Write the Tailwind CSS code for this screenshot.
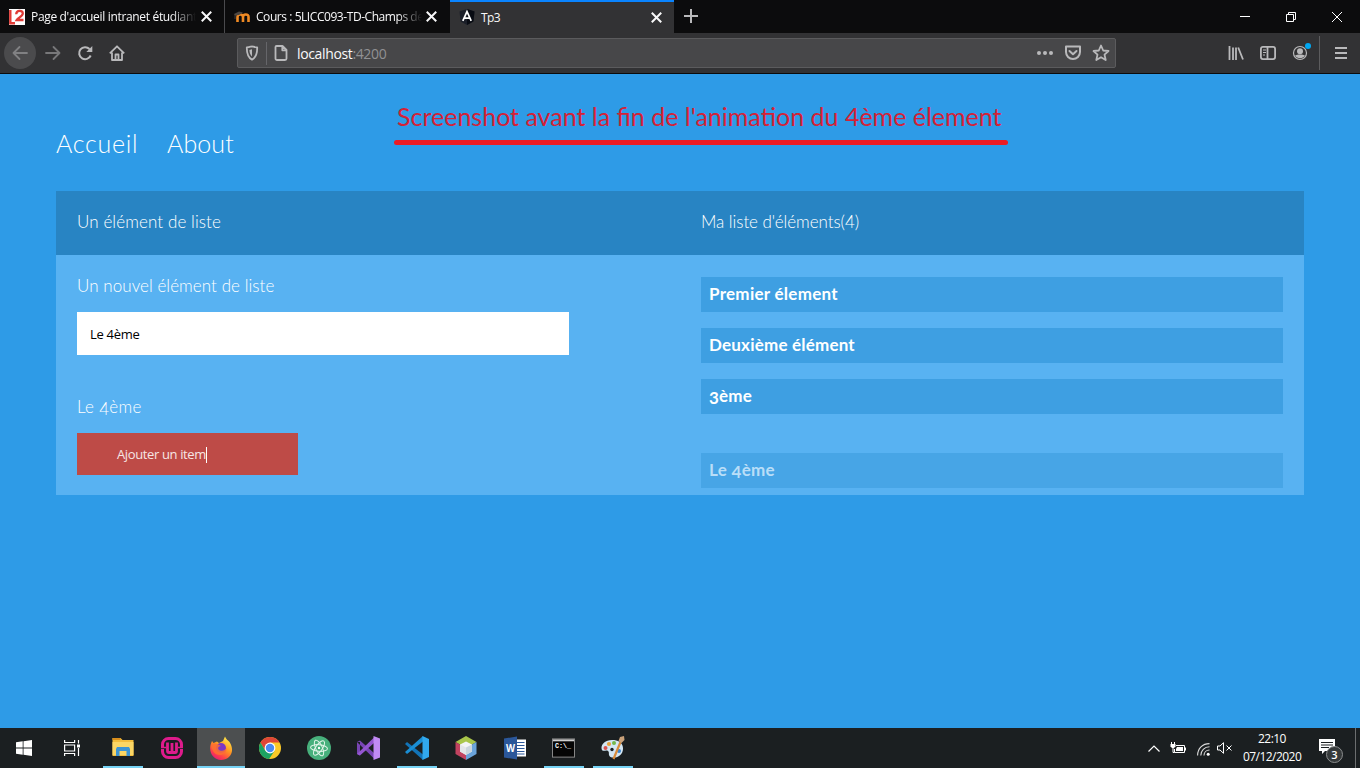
<!DOCTYPE html>
<html lang="fr">
<head>
<meta charset="utf-8">
<title>Tp3</title>
<script src="https://cdn.jsdelivr.net/npm/@tailwindcss/browser@4"></script>
</head>
<body class="w-[1360px] h-[768px] overflow-hidden flex flex-col bg-[#2e9be7] font-['Open_Sans','Noto_Sans',sans-serif]">

<!-- Tab strip -->
<header class="h-[33px] shrink-0 bg-[#0c0c0d] flex text-[12px] text-[#f9f9fa]">
  <div class="w-[225px] border-r border-[#4a4a4d] flex items-center pl-[9px]">
    <svg class="size-4 shrink-0" viewBox="0 0 16 16"><rect width="16" height="16" fill="#fff"/><path d="M1.300 1v13.300H6" fill="none" stroke="#e03a35" stroke-width="2.400"/><path d="M7.200 5.200C7.400 1 14 .8 13.800 4.600c0 2.500-4.500 4.100-6 6.400h6.700" fill="none" stroke="#e03a35" stroke-width="2.300"/></svg>
    <span class="ml-[6px] w-[165px] overflow-hidden whitespace-nowrap tracking-[-0.33px] mask-r-from-85%">Page d'accueil intranet étudiants</span>
    <svg class="ml-[5px] size-[11px] shrink-0" viewBox="0 0 10 10" stroke="#f9f9fa" stroke-width="1.800"><path d="M.7.700l8.600 8.600M9.300.700L.7 9.300"/></svg>
  </div>
  <div class="w-[225px] flex items-center pl-[9px]">
    <svg class="size-4 shrink-0" viewBox="0 0 16 16"><path d="M3.500 13V8q0-2.500 2.700-2.500T9 8v5M9 8q0-2.500 2.800-2.500T14.500 8v5" fill="none" stroke="#f08a24" stroke-width="2.600"/><path d="M0 5l5-2.500 4 1-4 2.500-3.500.5z" fill="#4b4642"/><path d="M1 5v5" stroke="#5b544d" stroke-width=".7"/></svg>
    <span class="ml-[6px] w-[166px] overflow-hidden whitespace-nowrap tracking-[-0.44px] mask-r-from-85%">Cours : 5LICC093-TD-Champs de</span>
    <svg class="ml-[4px] size-[11px] shrink-0" viewBox="0 0 10 10" stroke="#f9f9fa" stroke-width="1.800"><path d="M.7.700l8.600 8.600M9.300.700L.7 9.300"/></svg>
  </div>
  <div class="w-[224px] bg-[#323234] border-t-2 border-[#0a84ff] flex items-center pl-[9px] pb-px">
    <svg class="size-4 shrink-0" viewBox="0 0 16 16"><path d="M8 0l7.500 2.600-1.100 10L8 16l-6.400-3.400L.5 2.600z" fill="#1b1f29"/><path d="M8 0l7.500 2.600-1.100 10L8 16z" fill="#080b12"/><path d="M3.800 11.800L8 2.600l4.200 9.200M5.500 9.100h5" fill="none" stroke="#fff" stroke-width="1.700"/></svg>
    <span class="ml-[6px] w-[165px] pt-px tracking-[-0.6px]">Tp3</span>
    <svg class="ml-[5px] size-[11px] shrink-0" viewBox="0 0 10 10" stroke="#f9f9fa" stroke-width="1.800"><path d="M.7.700l8.600 8.600M9.300.700L.7 9.300"/></svg>
  </div>
  <svg class="ml-[10px] mt-[9px] size-[14px]" viewBox="0 0 14 14" stroke="#b9b9bb" stroke-width="2"><path d="M7 0v14M0 7h14"/></svg>
  <div class="ml-auto flex items-center gap-[36px] pr-[18px]">
    <svg class="size-[10px]" viewBox="0 0 10 10" stroke="#fff"><path d="M0 4.500h10"/></svg>
    <svg class="size-[10px]" viewBox="0 0 10 10" stroke="#fff" fill="none"><path d="M.5 2.500h7v7h-7zM2.500 2.500v-2h7v7h-2"/></svg>
    <svg class="size-[10px]" viewBox="0 0 10 10" stroke="#fff"><path d="M0 0l10 10M10 0L0 10"/></svg>
  </div>
</header>

<!-- Navigation toolbar -->
<nav class="h-[41px] shrink-0 bg-[#323234] border-b border-[#0c0c0d] flex items-center text-[#b9b9bb]">
  <div class="ml-[4px] size-8 rounded-full bg-[#4b4b4d] grid place-items-center">
    <svg class="size-4" viewBox="0 0 16 16" fill="none" stroke="#818183" stroke-width="1.800" stroke-linecap="round" stroke-linejoin="round"><path d="M15 8H1.500M7.500 2l-6 6 6 6"/></svg>
  </div>
  <svg class="ml-[9px] size-4" viewBox="0 0 16 16" fill="none" stroke="#78787a" stroke-width="1.800" stroke-linecap="round" stroke-linejoin="round"><path d="M1 8h13.500M8.500 2l6 6-6 6"/></svg>
  <svg class="ml-4 size-4" viewBox="0 0 16 16" fill="none" stroke="currentColor" stroke-width="2"><path d="M13.700 10.500A6 6 0 1 1 12.500 4"/><path d="M15.300 1v6h-6z" fill="currentColor" stroke="none"/></svg>
  <svg class="ml-4 size-4" viewBox="0 0 16 16" fill="none" stroke="currentColor" stroke-width="1.800" stroke-linejoin="round"><path d="M.8 8.300L8 1.300l7.200 7M3 7.500V15h10V7.500"/><path d="M6.500 15V9.500h3V15"/></svg>

  <div class="ml-[112px] w-[879px] h-[30px] rounded-[2px] border border-[#5b5b5d] bg-[#474749] flex items-center">
    <svg class="ml-[6px] size-4" viewBox="0 0 16 16" fill="none" stroke="currentColor" stroke-width="1.800" stroke-linejoin="round"><path d="M2.800 2.500C6 2.300 6.500 1.500 8 1.300c1.500.2 2 1 5.200 1.200C13.300 9 12 12.500 8 14.700 4 12.500 2.700 9 2.800 2.500z"/><path d="M8 4.300v7.200C6.200 10 5.600 8 5.400 5z" fill="currentColor" stroke="none"/></svg>
    <span class="ml-[6px] w-px h-[23px] bg-[#66666a]"></span>
    <svg class="ml-[6px] size-4" viewBox="0 0 16 16" fill="none" stroke="currentColor" stroke-width="1.800" stroke-linejoin="round"><path d="M3.500 1h6l4 4v8.500a1.500 1.500 0 0 1-1.500 1.500H4a1.500 1.500 0 0 1-1.500-1.500V2a1 1 0 0 1 1-1zM9.300 1v4.300h4.200"/></svg>
    <span class="ml-[8px] pt-px text-[14px] tracking-[-0.36px] text-[#f9f9fa]">localhost<span class="text-[#919193]">:4200</span></span>
    <svg class="ml-auto size-[18px]" viewBox="0 0 18 18" fill="currentColor"><circle cx="3" cy="9" r="2"/><circle cx="9" cy="9" r="2"/><circle cx="15" cy="9" r="2"/></svg>
    <svg class="ml-[10px] size-[18px]" viewBox="0 0 18 18" fill="none" stroke="currentColor" stroke-width="2" stroke-linejoin="round" stroke-linecap="round"><path d="M2 2.500h14V8a7 7 0 0 1-14 0zM5.500 7l3.500 3.300L12.500 7"/></svg>
    <svg class="ml-[10px] mr-[5px] size-[18px]" viewBox="0 0 18 18" fill="none" stroke="currentColor" stroke-width="1.800" stroke-linejoin="round"><path d="M9 1.500l2.200 5 5.300.5-4 3.600 1.200 5.400L9 13.200 4.300 16l1.200-5.400L1.500 7l5.300-.5z"/></svg>
  </div>

  <div class="ml-auto flex items-center">
    <svg class="size-4" viewBox="0 0 16 16" fill="none" stroke="currentColor" stroke-width="1.800"><path d="M1.500 1v14M5 2.500V15M8 2.500V15M10.200 2.500L15 14.500"/></svg>
    <svg class="ml-4 size-4" viewBox="0 0 16 16" fill="none" stroke="currentColor" stroke-width="1.800"><rect x=".9" y="1.900" width="14.200" height="12.200" rx="2"/><path d="M7.500 2v12"/><path d="M3 5h3M3 7.500h3M3 10h2" stroke-width="1"/></svg>
    <svg class="ml-[14px] w-[21px] h-[26px]" viewBox="0 0 21 26"><circle cx="10" cy="13" r="6.500" fill="none" stroke="currentColor" stroke-width="1.200"/><circle cx="10" cy="11.200" r="3" fill="currentColor"/><path d="M5 15.500c2-1.500 8-1.500 10 0-2 3.500-8 3.500-10 0z" fill="currentColor"/><circle cx="18" cy="6" r="3" fill="#00a8f3"/></svg>
    <span class="ml-[8px] w-px h-[34px] bg-[#5c5c5e]"></span>
    <svg class="ml-[15px] mr-[13px] size-3" viewBox="0 0 12 12" stroke="currentColor" stroke-width="2"><path d="M0 1h12M0 6h12M0 11h12"/></svg>
  </div>
</nav>

<!-- Page -->
<main class="relative flex-1 px-14 pt-[52px] text-white font-['Lato',sans-serif]">
  <ul class="flex gap-[29px] h-9 items-center text-[25px] font-light whitespace-nowrap">
    <li class="w-[82px] tracking-[0.7px]">Accueil</li>
    <li class="tracking-[0.1px]">About</li>
  </ul>

  <section class="mt-[29px]">
    <div class="h-16 grid grid-cols-2 items-center bg-[#2884c3] text-[17px] font-light px-[21px] pb-[2px]">
      <h2 class="tracking-[0.1px]">Un élément de liste</h2>
      <h2 class="pl-[21px] tracking-[-0.06px]">Ma liste d'éléments(4)</h2>
    </div>
    <div class="h-60 grid grid-cols-2 bg-[#58b2f2]">
      <div class="pl-[21px] pt-[19px] text-[17px] font-light">
        <p class="h-6 leading-6 tracking-[0.06px]">Un nouvel élément de liste</p>
        <div class="mt-[14px] w-[492px] h-[43px] bg-white text-black flex items-center pl-[13px] pt-[2px] text-[13px] font-normal font-['Open_Sans',sans-serif] tracking-[-0.3px]">Le 4ème</div>
        <p class="mt-10 h-6 leading-6 tracking-[0.3px]">Le <span class="relative top-[2px]">4</span>ème</p>
        <div class="mt-[14px] w-[221px] h-[42px] bg-[#be4b47] flex items-center pl-10 pt-px text-[13px] font-normal font-['Open_Sans',sans-serif] tracking-[-0.37px] text-[#f6e5e4]">Ajouter un item<span class="w-px h-4 bg-white"></span></div>
      </div>
      <ul class="pl-[21px] pr-[21px] pt-[22px] flex flex-col gap-4 text-[17px] font-bold">
        <li class="h-[35px] bg-[#3e9fe2] pl-2 leading-[34px] tracking-[0.27px]">Premier élement</li>
        <li class="h-[35px] bg-[#3e9fe2] pl-2 leading-[34px] tracking-[0.2px]">Deuxième élément</li>
        <li class="h-[35px] bg-[#3e9fe2] pl-2 leading-[34px] tracking-[0.2px]"><span class="relative top-[2px]">3</span>ème</li>
        <li class="mt-[23px] h-[35px] bg-[#47a5e6] pl-2 leading-[34px] tracking-[0.3px] text-[#b9def8]">Le <span class="relative top-[2px]">4</span>ème</li>
      </ul>
    </div>
  </section>

  <!-- Annotation drawn over the page -->
  <div class="absolute left-[394px] top-[24px] w-[614px] whitespace-nowrap">
    <p class="h-[42px] pl-[3px] text-[25px] leading-[37px] text-[#d52136]">Screenshot avant la fin de l'animation du 4ème élement</p>
    <div class="h-[5px] rounded-full bg-[#ec1c24]"></div>
  </div>
</main>

<!-- Taskbar -->
<footer class="h-10 shrink-0 bg-[#1b1f21] flex text-white">
  <div class="w-12 grid place-items-center"><svg class="size-4" viewBox="0 0 16 16" fill="#fff"><path d="M0 2.300l6.700-1v6.300H0zM7.500 1.200L16 0v7.600H7.500zM0 8.400h6.700v6.300l-6.700-1zM7.500 8.400H16V16l-8.500-1.200z"/></svg></div>
  <div class="w-12 mr-[3px] grid place-items-center"><svg class="size-4" viewBox="0 0 16 16" fill="none" stroke="#fff" stroke-width="1.200"><path d="M.6 0v2.500h10V0M.6 5h10v6H.6zM.6 16v-2.500h10V16M14.500 0v3.500M14.500 8v8"/><path d="M13 4.500h3v3h-3z" fill="#fff" stroke="none"/></svg></div>
  <div class="flex gap-px">
    <div class="w-12 px-1 flex flex-col items-center justify-end"><svg class="mb-[7px] size-6" viewBox="0 0 24 24"><path d="M1.500 3h8l2 2h11v16h-21z" fill="#f3bd3c"/><path d="M1.500 7h21v13h-21z" fill="#fbd665"/><path d="M1.500 3h8v2h-8z" fill="#d98e1c"/><path d="M5 21v-7l1-2h12l1 2v7h-3.500v-5h-7v5z" fill="#3d94d3"/></svg><span class="w-10 h-[2px] bg-[#76d3f5]"></span></div>
    <div class="w-12 grid place-items-center"><svg class="size-6" viewBox="0 0 24 24" fill="none" stroke="#df1b8c"><path d="M2.500 11V8.500a6 6 0 0 1 6-6h7a6 6 0 0 1 6 6V11M2.500 13v2.500a6 6 0 0 0 6 6h7a6 6 0 0 0 6-6V13" stroke-width="3"/><path d="M1 11.500h5M18 11.500h5" stroke-width="1.500"/><path d="M7.500 6.500V15q0 1.500 1.500 1.500h6q1.500 0 1.500-1.500V6.500M12 7v9" stroke-width="2.800"/></svg></div>
    <div class="w-12 bg-[#4c4f50] flex flex-col items-center justify-end"><svg class="mb-[6px] size-6" viewBox="0 0 24 24"><defs><linearGradient id="ff" x1=".8" y1="0" x2=".2" y2="1"><stop offset="0" stop-color="#fff04a"/><stop offset=".45" stop-color="#ff9522"/><stop offset=".75" stop-color="#ff4247"/><stop offset="1" stop-color="#e2137f"/></linearGradient></defs><path d="M3 5l1.500 2L8 5.500 10 7l4-2 2-4.500c1 3 3 3.500 4.500 5.500C27 16 20 24 12 24S-2 15 3 5z" fill="url(#ff)"/><circle cx="12" cy="12" r="5" fill="#7c37c4"/><path d="M2 9c4-3 6-1 10 1-3 0-4 3-1 4.500 3 1 5-.5 6.500-2.500 0 5-3 7-6.500 7-6 0-8-5-9-10z" fill="#ff7030" opacity=".85"/></svg><span class="w-full h-[2px] bg-[#76d3f5]"></span></div>
    <div class="w-12 grid place-items-center"><svg class="size-[22px]" viewBox="0 0 24 24"><circle cx="12" cy="12" r="12" fill="#fbc928"/><path d="M1.600 6A12 12 0 0 1 22.400 6H12L7 15z" fill="#df4637"/><path d="M1.600 6A12 12 0 0 0 11 24l6-9H7z" fill="#1da262"/><circle cx="12" cy="12" r="5.900" fill="#fff"/><circle cx="12" cy="12" r="4.600" fill="#4a8af4"/></svg></div>
    <div class="w-12 grid place-items-center"><svg class="size-6" viewBox="0 0 24 24"><circle cx="12" cy="12" r="12" fill="#47b07c"/><g fill="none" stroke="#e2f5e9" stroke-width="1"><ellipse cx="12" cy="12" rx="3.300" ry="8.500" transform="rotate(-25 12 12)"/><ellipse cx="12" cy="12" rx="3.300" ry="8.500" transform="rotate(35 12 12)"/><ellipse cx="12" cy="12" rx="3.300" ry="8.500" transform="rotate(95 12 12)"/></g><circle cx="12" cy="12" r="1.200" fill="#fff"/></svg></div>
    <div class="w-12 grid place-items-center"><svg class="size-6" viewBox="0 0 24 24"><path d="M1 6l3-1.500L18 17v5.500zM1 6v12l3 1.500V6z" fill="#7945b5"/><path d="M1 18l3 1.500L18 7V1.500z" fill="#9456d0"/><path d="M17.500 0L24 2.500v19L17.500 24z" fill="#c18af4"/></svg></div>
    <div class="w-12 flex flex-col items-center justify-end"><svg class="mb-[6px] size-6" viewBox="0 0 24 24"><path d="M0 8l2-2 16 12.500V24z" fill="#1274b8"/><path d="M0 16l2 2L18 5.500V0z" fill="#1a8ed4"/><path d="M17.500 0L24 3v18l-6.500 3z" fill="#31a9ee"/></svg><span class="w-10 h-[2px] bg-[#76d3f5]"></span></div>
    <div class="w-12 grid place-items-center"><svg class="size-6" viewBox="0 0 24 24"><path d="M12 0l10.500 6L12 12 1.500 6z" fill="#a9c64a"/><path d="M1.500 6L12 12v12L1.500 18z" fill="#c24360"/><path d="M22.500 6L12 12v12l10.500-6z" fill="#6aa3da"/><path d="M12 5.500l6 3v7l-6 3.500-6-3.500v-7z" fill="#f2f4f5"/><path d="M12 11.500l6-3v7L12 19z" fill="#cbd6dd"/><path d="M6 8.500l6 3V19l-6-3.500z" fill="#e3e6e8"/></svg></div>
    <div class="w-12 grid place-items-center"><svg class="size-6" viewBox="0 0 24 24"><path d="M12 3.500h11v17H12z" fill="#fff"/><path d="M14 6.500h7.500M14 9.500h7.500M14 12.500h7.500M14 15.500h7.500M14 18h7.500" stroke="#2b579a" stroke-width="1.100"/><path d="M1 2.500L14 .5v23l-13-2z" fill="#2b579a"/><text x="3" y="16" textLength="9" lengthAdjust="spacingAndGlyphs" font-family="Open Sans" font-size="10.500" font-weight="700" fill="#fff">W</text></svg></div>
    <div class="w-12 flex flex-col items-center justify-end"><svg class="mb-[8px] mr-px w-[23px] h-5" viewBox="0 0 24 20"><rect x=".5" y=".5" width="23" height="19" fill="#050505" stroke="#8c8c8c"/><path d="M1 1h22v2H1z" fill="#d0d0d0"/><text x="3" y="10" font-family="Liberation Mono" font-size="7" font-weight="700" fill="#fff">C:\_</text></svg><span class="w-10 h-[2px] bg-[#76d3f5]"></span></div>
    <div class="w-12 flex flex-col items-center justify-end"><svg class="mb-[6px] size-6" viewBox="0 0 24 24"><path d="M11 4C3 4-1 10 1 14c1.500 2 4-.5 6 1 2 1.500-.5 4 2.500 6 4 2 13-1 12.500-9C21.700 6.500 17 4 11 4z" fill="#d3e6f3"/><circle cx="4.500" cy="12" r="2" fill="#d9534f"/><circle cx="8" cy="8" r="2.100" fill="#e8a23c"/><circle cx="13" cy="7" r="2" fill="#74b94a"/><circle cx="11" cy="13.500" r="1.700" fill="#1b1f21"/><circle cx="18" cy="15" r="2" fill="#3a86d0"/><path d="M19.500 6L12.500 23" stroke="#d98b3a" stroke-width="2.200"/><path d="M17.500 5l1.500-4 4-1 .5 4-3 3z" fill="#c9a17a"/></svg><span class="w-10 h-[2px] bg-[#76d3f5]"></span></div>
  </div>
  <div class="ml-auto flex items-center">
    <svg class="w-3 h-[7px]" viewBox="0 0 12 7" fill="none" stroke="#fff" stroke-width="1.200"><path d="M.5 6.500L6 1l5.500 5.500"/></svg>
    <svg class="ml-[10px] w-4 h-3" viewBox="0 0 16 12" fill="none" stroke="#fff"><path d="M6 3.500h8.500v7H4.500V7M15.500 5.500v3"/><path d="M7 5h6v4H6V7z" fill="#fff" stroke="none"/><path d="M1.500 0v2M4.500 0v2M3 6v4.500h1.500"/><path d="M.5 2h5v2.500L4 6H2L.5 4.500z" fill="#fff" stroke="none"/></svg>
    <svg class="ml-[11px] w-[13px] h-[13px] mt-[2px]" viewBox="0 0 13 13" fill="none" stroke="#ddd" stroke-width="1.100"><path d="M.6 12.500C.6 5.500 5.500.600 12.500.600M3.800 12.500c0-5 3.700-8.700 8.700-8.700M7 12.500C7 9.300 9.300 7 12.500 7"/><circle cx="11.200" cy="11.200" r="1.500" fill="#fff" stroke="none"/></svg>
    <svg class="ml-[7px] w-[15px] h-3" viewBox="0 0 15 12" fill="none" stroke="#fff"><path d="M.5 4v4H3l3.500 3.300V.7L3 4zM9.500 3.500l5 5M14.500 3.500l-5 5"/></svg>
    <div class="ml-[11px] w-[58px] text-center text-[12px] leading-[18px] tracking-[-0.55px] whitespace-nowrap pb-px"><div>22:10</div><div>07/12/2020</div></div>
    <div class="ml-[18px] relative w-[25px] h-[26px] mt-[8px]">
      <svg class="size-4" viewBox="0 0 16 16"><path d="M0 0h16v12H6l-3 3v-3H0z" fill="#fff"/><path d="M2 3.500h12M2 6h12M2 8.500h8" stroke="#1b1f21"/></svg>
      <span class="absolute left-[7px] top-[7px] size-[17px] rounded-full border border-[#8b8d8e] bg-[#35393a] grid place-items-center text-[11px] font-semibold leading-none">3</span>
    </div>
    <span class="ml-[11px] mr-1 w-px h-10 bg-[#6c6e6f]"></span>
  </div>
</footer>
</body>
</html>
